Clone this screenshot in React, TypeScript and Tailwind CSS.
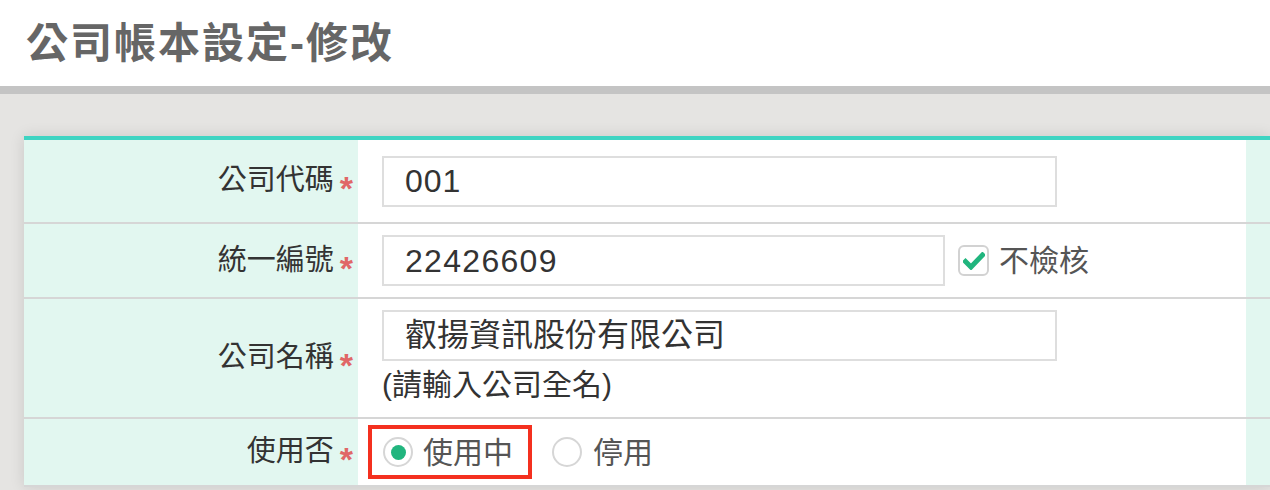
import React from "react";

const Star = () => (
  <span className="ml-[6px] mr-[5px] text-[34px] font-bold leading-none text-[#e06767] translate-y-[7px]">*</span>
);

const Label = ({ text }: { text: string }) => (
  <div className="w-[334px] shrink-0 bg-[#e2f7f0] flex items-center justify-end text-[29px] text-[#333]">
    <span>{text}</span>
    <Star />
  </div>
);

const Row = ({
  label,
  height,
  children,
}: {
  label: string;
  height: string;
  children: React.ReactNode;
}) => (
  <div className={`flex ${height} border-b-2 border-[#d6d6d6]`}>
    <Label text={label} />
    <div className="w-[888px] shrink-0 bg-white flex flex-col justify-center">{children}</div>
    <div className="flex-1 bg-[#e2f7f0]"></div>
  </div>
);

const Input = ({ value, width, extra = "" }: { value: string; width: string; extra?: string }) => (
  <div
    className={`${width} ${extra} h-[51px] border-2 border-[#dedede] bg-white flex items-center pl-[21px] text-[32px] text-[#333]`}
  >
    {value}
  </div>
);

const Radio = ({ checked }: { checked?: boolean }) => (
  <span className="w-[30px] h-[30px] rounded-full border-2 border-[#d6d6d6] bg-white flex items-center justify-center shrink-0">
    {checked && <span className="w-[15px] h-[15px] rounded-full bg-[#21b57e]"></span>}
  </span>
);

export default function App() {
  return (
    <div className="min-h-screen bg-[#e5e4e2] font-['Liberation_Sans','Noto_Sans_CJK_TC',sans-serif] overflow-hidden">
      <header className="h-[86px] bg-white flex items-center pl-[26px]">
        <h1 className="text-[42px] font-semibold text-[#666] tracking-[2px]">公司帳本設定-修改</h1>
      </header>
      <div className="h-[8px] bg-[#c4c4c4]"></div>
      <div className="pt-[42px] pl-[24px]">
        <div className="border-t-4 border-[#3ed4c2] shadow-[0_0_14px_rgba(0,0,0,0.12)]">
          <Row label="公司代碼" height="h-[84px]">
            <div className="pl-[24px]">
              <Input value="001" width="w-[675px]" extra="tracking-[1px]" />
            </div>
          </Row>
          <Row label="統一編號" height="h-[75px]">
            <div className="pl-[24px] flex items-center">
              <Input value="22426609" width="w-[563px]" extra="tracking-[1.3px]" />
              <span className="ml-[13px] w-[31px] h-[31px] rounded-[6px] border-2 border-[#d2d2d2] bg-white flex items-center justify-center">
                <svg width="22" height="18" viewBox="0 0 22 18">
                  <path d="M2.5 9.5 L8 15 L19.5 3" fill="none" stroke="#21b57e" strokeWidth="5" strokeLinecap="square" />
                </svg>
              </span>
              <span className="ml-[10px] text-[30px] text-[#555]">不檢核</span>
            </div>
          </Row>
          <Row label="公司名稱" height="h-[120px]">
            <div className="pl-[24px] flex flex-col items-start">
              <Input value="叡揚資訊股份有限公司" width="w-[675px]" />
              <span className="mt-[2px] text-[30px] text-[#333] leading-[44px]">(請輸入公司全名)</span>
            </div>
          </Row>
          <Row label="使用否" height="h-[68px]">
            <div className="pl-[10px] flex items-center">
              <span className="w-[164px] h-[54px] border-4 border-[#f4301f] flex items-center pl-[11px]">
                <Radio checked />
                <span className="ml-[10px] text-[30px] text-[#555]">使用中</span>
              </span>
              <span className="ml-[20px] flex items-center">
                <Radio />
                <span className="ml-[11px] text-[30px] text-[#555]">停用</span>
              </span>
            </div>
          </Row>
        </div>
      </div>
    </div>
  );
}
